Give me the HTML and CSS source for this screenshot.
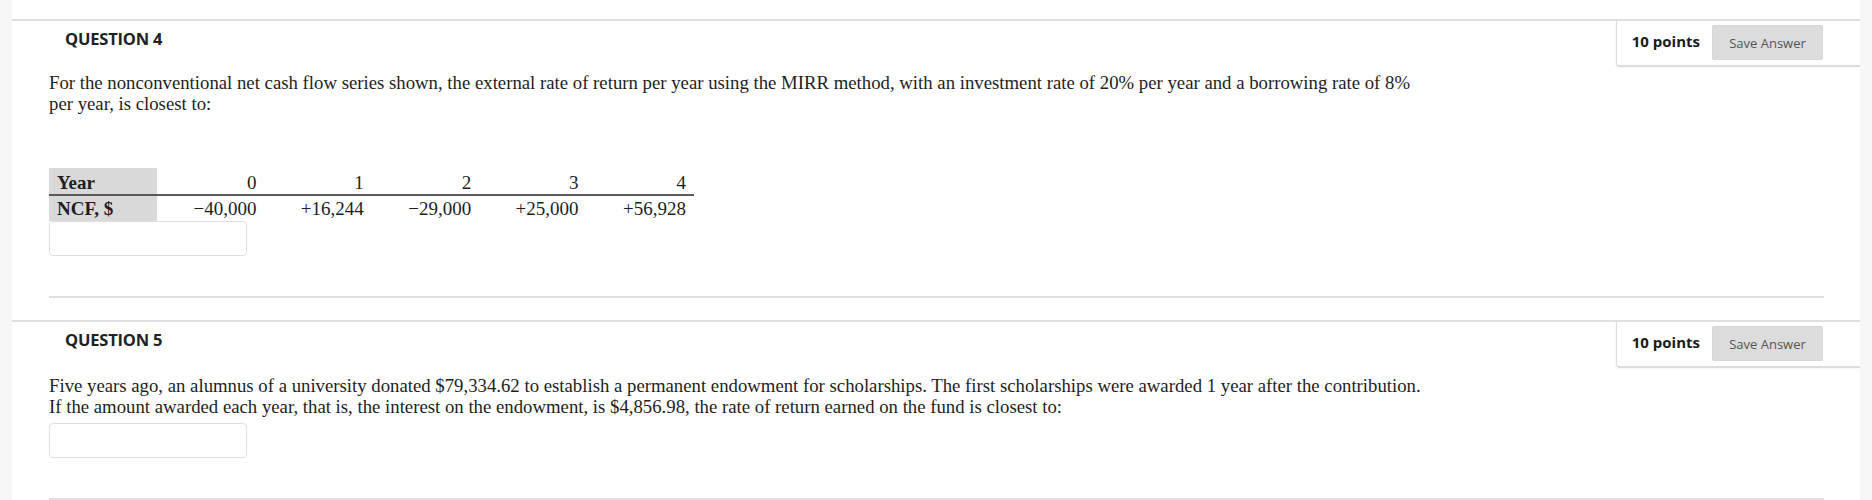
FILE: index.html
```html
<!DOCTYPE html>
<html lang="en">
<head>
<meta charset="utf-8">
<title>Questions</title>
<link rel="stylesheet" href="styles.css">
</head>
<body>
<div class="page">
  <div class="gutter"></div>
  <main class="content">
    <section class="question">
      <div class="q-head">
        <h3 class="q-title">QUESTION 4</h3>
        <div class="points-box">
          <span class="points">10 points</span>
          <button class="save" type="button">Save Answer</button>
        </div>
      </div>
      <div class="q-body">
        <p class="q-text">For the nonconventional net cash flow series shown, the external rate of return per year using the MIRR method, with an investment rate of 20% per year and a borrowing rate of 8%<br>per year, is closest to:</p>
        <table class="ncf">
          <tr class="row-year">
            <th>Year</th><td>0</td><td>1</td><td>2</td><td>3</td><td>4</td>
          </tr>
          <tr class="row-ncf">
            <th>NCF, $</th><td>−40,000</td><td>+16,244</td><td>−29,000</td><td>+25,000</td><td>+56,928</td>
          </tr>
        </table>
        <div class="answer tight"></div>
        <hr class="sep">
      </div>
    </section>
    <section class="question">
      <div class="q-head">
        <h3 class="q-title">QUESTION 5</h3>
        <div class="points-box">
          <span class="points">10 points</span>
          <button class="save" type="button">Save Answer</button>
        </div>
      </div>
      <div class="q-body">
        <p class="q-text">Five years ago, an alumnus of a university donated $79,334.62 to establish a permanent endowment for scholarships. The first scholarships were awarded 1 year after the contribution.<br>If the amount awarded each year, that is, the interest on the endowment, is $4,856.98, the rate of return earned on the fund is closest to:</p>
        <div class="answer"></div>
        <hr class="sep">
      </div>
    </section>
  </main>
  <div class="gutter"></div>
</div>
</body>
</html>
```

FILE: styles.css
```css
html, body {
  margin: 0;
  padding: 0;
  background: #ffffff;
}

.page {
  display: grid;
  grid-template-columns: 12px 1fr 12px;
  min-height: 500px;
}

.gutter {
  background: #f7f7f7;
}

.content {
  padding-top: 19px;
}

.question + .question {
  margin-top: 22px;
}

.question + .question .q-text {
  margin-top: 7px;
}

.question {
  border-top: 2px solid #e0e0e0;
}

.q-head {
  display: flex;
  justify-content: space-between;
  align-items: flex-start;
}

.q-title {
  margin: 9px 0 0 53px;
  font-family: "Open Sans", sans-serif;
  font-weight: 700;
  font-size: 16.5px;
  line-height: 18px;
  color: #222;
  letter-spacing: -0.2px;
}

.points-box {
  display: flex;
  align-items: center;
  gap: 12px;
  padding: 4px 37px 5px 15px;
  border-left: 1px solid #dcdcdc;
  border-bottom: 2px solid #dcdcdc;
  border-bottom-left-radius: 4px;
  box-shadow: -1px 1px 2px rgba(0, 0, 0, 0.04);
}

.points {
  font-family: "Open Sans", sans-serif;
  font-weight: 700;
  font-size: 15px;
  color: #1a1a1a;
  padding-bottom: 4px;
}

.save {
  width: 111px;
  height: 35px;
  border: 1px solid #d6d6d6;
  border-radius: 2px;
  background: #dcdcdc;
  font-family: "Open Sans", sans-serif;
  font-size: 13px;
  color: #555;
  padding: 0;
}

.q-body {
  padding: 0 36px 0 37px;
}

.q-text {
  margin: 5px 0 0 0;
  font-family: "Liberation Serif", "Times New Roman", serif;
  font-size: 18.75px;
  line-height: 21px;
  color: #1e1e1e;
}

.ncf {
  margin-top: 54px;
  border-collapse: collapse;
  font-family: "Liberation Serif", "Times New Roman", serif;
  font-size: 19px;
  color: #1e1e1e;
}

.ncf th,
.ncf td {
  padding: 0 8px;
  height: 25px;
  line-height: 20px;
}

.ncf th {
  width: 92px;
  text-align: left;
  font-weight: 700;
  background: #d9d9d9;
}

.ncf td {
  width: 91.4px;
  text-align: right;
}

.row-year th,
.row-year td {
  border-bottom: 2px solid #5a5a5a;
  vertical-align: bottom;
  padding-bottom: 1px;
}

.answer {
  margin-top: 6px;
  width: 196px;
  height: 33px;
  border: 1px solid #dedede;
  border-radius: 4px;
}

.answer.tight {
  margin-top: 0;
}

.sep {
  margin: 40px 0 0 0;
  border: 0;
  height: 2px;
  background: #e0e0e0;
}
```
